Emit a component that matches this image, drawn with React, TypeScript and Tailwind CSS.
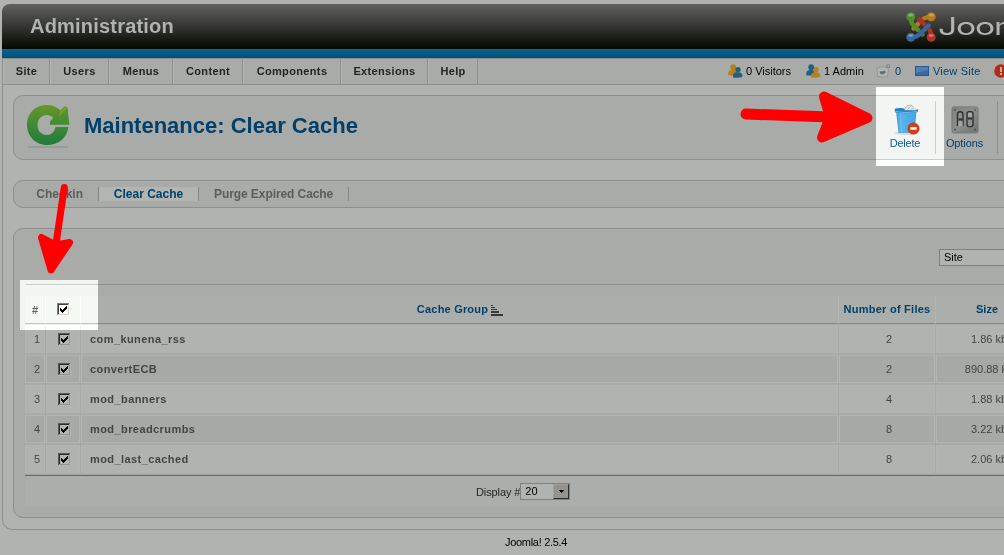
import React from 'react';

const menu = [
  { label: 'Site', w: 'w-[47px]' },
  { label: 'Users', w: 'w-[59px]' },
  { label: 'Menus', w: 'w-[64px]' },
  { label: 'Content', w: 'w-[70px]' },
  { label: 'Components', w: 'w-[98px]' },
  { label: 'Extensions', w: 'w-[87px]' },
  { label: 'Help', w: 'w-[50px]' },
];

const rows = [
  { n: 1, name: 'com_kunena_rss', files: 2, size: '1.86 kb' },
  { n: 2, name: 'convertECB', files: 2, size: '890.88 kb' },
  { n: 3, name: 'mod_banners', files: 4, size: '1.88 kb' },
  { n: 4, name: 'mod_breadcrumbs', files: 8, size: '3.22 kb' },
  { n: 5, name: 'mod_last_cached', files: 8, size: '2.06 kb' },
];

function Checkbox() {
  return (
    <svg width="13" height="13" viewBox="0 0 13 13" className="block shrink-0" shapeRendering="crispEdges">
      <rect width="13" height="13" fill="#b3b5b1" />
      <path d="M0 0H12V1H1V12H0Z" fill="#595a56" />
      <path d="M1 1H11V2H2V11H1Z" fill="#2c2d2b" />
      <path d="M11 1H12V12H1V11H11Z" fill="#94938a" />
      <path d="M3 5h1v1h1v1h1v-1h1v-1h1v-1h1v-1h1v3h-1v1h-1v1h-1v1h-1v1h-1v-1h-1v-1h-1Z" fill="#000" />
    </svg>
  );
}

function JoomlaMark() {
  const d = 'M5 5Q4.5 10.500 8 14L16.500 22.500';
  const colors = ['#4f8f28', '#b9791c', '#b5302a', '#3a65a0'];
  return (
    <svg width="30" height="30" viewBox="0 0 30 30" className="block shrink-0">
      {colors.map((c, i) => (
        <g key={c} transform={`rotate(${i * 90} 15 15)`}>
          <path d={d} fill="none" stroke="#2c2e2a" strokeWidth="5.6" opacity="0.5" />
          <path d={d} fill="none" stroke={c} strokeWidth="4.4" strokeLinecap="round" />
          <circle cx="4.8" cy="4.8" r="4.500" fill={c} />
        </g>
      ))}
      <path d="M5 5Q4.500 10.500 8 14L12 18" fill="none" stroke="#4f8f28" strokeWidth="4.400" />
      <g fill="#c3c7bb" opacity="0.55">
        <ellipse cx="4.8" cy="3" rx="2.6" ry="1.5" />
        <ellipse cx="25.2" cy="3" rx="2.6" ry="1.5" />
        <ellipse cx="4.8" cy="23.5" rx="2.6" ry="1.2" />
        <ellipse cx="25.2" cy="23.5" rx="2.6" ry="1.2" />
      </g>
    </svg>
  );
}

function RefreshIcon() {
  return (
    <svg width="44" height="45" viewBox="0 0 44 45" className="block shrink-0">
      <defs>
        <linearGradient id="rg" x1="0" y1="0" x2="0" y2="1">
          <stop offset="0" stopColor="#69952a" />
          <stop offset="0.5" stopColor="#3f8a34" />
          <stop offset="1" stopColor="#227a3c" />
        </linearGradient>
      </defs>
      <path
        d="M20.5 1C9 1 1 9.800 1 21s8.500 20 20 20c11 0 20.500-7 21.300-18H29.500c-1 4.800-4 8-8.700 8-5.500 0-9.300-4.200-9.300-10s4-10 9.300-10c2.800 0 4.800 1 6.400 2.800L24 17.500V20.700H43.300L41.500 3.500 39 2.300 34.200 6.200C30.500 2.700 26.500 1 20.500 1Z"
        fill="url(#rg)"
      />
      <path d="M34 7l5.500-4.500 2 1.200-9 9z" fill="#7da423" opacity=".7" />
      <rect x="2" y="42" width="40" height="2" rx="1" fill="#999b98" />
    </svg>
  );
}

function UsersIcon({ back, front }: { back: string; front: string }) {
  return (
    <svg width="15" height="14" viewBox="0 0 15 14" className="block shrink-0">
      <circle cx="5.200" cy="3.200" r="2.900" fill={back} />
      <path d="M0.300 11.500V9Q0.500 6.500 3.500 6H6.500Q9 6.500 9 9V11.500Z" fill={back} />
      <circle cx="10" cy="5.600" r="2.700" fill={front} />
      <path d="M5 13.500V11Q5.500 8.900 8 8.300H11.500Q14 8.700 14.300 11V13Q10 14.200 5 13.500Z" fill={front} />
    </svg>
  );
}

function MailIcon() {
  return (
    <svg width="15" height="14" viewBox="0 0 15 14" className="block shrink-0">
      <path d="M1 4.500Q4 2 10 3L12.500 5 11.500 12.500Q6 13.500 1.500 12.500Z" fill="#b2b5b1" stroke="#8d908f" strokeWidth=".8" />
      <path d="M3.500 7.500l5-1 1.500 1.800-2.500 2.200H4.500Z" fill="#73838b" />
      <path d="M4 8l2 1.200L9 7.500" stroke="#3d5662" fill="none" strokeWidth=".8" />
      <rect x="10.500" y=".5" width="3.500" height="3.500" rx=".8" fill="#6f8490" />
      <rect x="11.500" y="1.500" width="1.400" height="1.500" fill="#b7c2c8" />
    </svg>
  );
}

function TrashIcon() {
  return (
    <svg width="28" height="32" viewBox="0 0 28 32" className="block">
      <defs>
        <linearGradient id="tr" x1="0" y1="0" x2="1" y2="0">
          <stop offset="0" stopColor="#3c9fdc" />
          <stop offset=".25" stopColor="#5ab4ea" />
          <stop offset="1" stopColor="#43a6e2" />
        </linearGradient>
      </defs>
      <path d="M0 29.500L4 27.500H20L25 30Q12 32 0 29.500Z" fill="#d5d7d5" />
      <path d="M10 6L12.500 2 17 1 20 3.500 22 5.500V7H9Z" fill="#e9ebea" stroke="#a7aaa9" strokeWidth=".8" />
      <path d="M13.500 5l3-2.500M17.500 6l1-2" stroke="#b4b7b6" />
      <path d="M2 7Q12 10.500 22.500 7L20.500 29H4.500Z" fill="url(#tr)" />
      <path d="M.800 4.800Q3 3.800 9.500 4.200L11 6.300H22L24 5V8Q12 10.500 .8 8.200Z" fill="#2384c4" />
      <path d="M1.200 7.500Q12 9.800 23.500 7.500" fill="none" stroke="#7cc6f0" strokeWidth=".8" />
      <path d="M6 11L7.500 28" stroke="#8acdf4" strokeWidth="1" opacity=".5" />
      <circle cx="19.500" cy="24.500" r="5.600" fill="#de3a10" stroke="#b92b08" strokeWidth=".7" />
      <rect x="16.300" y="23.100" width="6.400" height="2.600" fill="#fff" />
    </svg>
  );
}

function OptionsIcon() {
  return (
    <svg width="28" height="29" viewBox="0 0 28 29" className="block">
      <defs>
        <linearGradient id="op" x1="0" y1="0" x2="1" y2="1">
          <stop offset="0" stopColor="#7d807f" />
          <stop offset=".5" stopColor="#8c8f8d" />
          <stop offset="1" stopColor="#717473" />
        </linearGradient>
      </defs>
      <rect x=".5" y="2" width="27" height="26" rx="2" fill="#929593" />
      <rect x="1" y=".8" width="26" height="25.600" rx="2" fill="url(#op)" stroke="#717473" strokeWidth=".7" />
      <g fill="#4b4d4c">
        <circle cx="4" cy="3.800" r=".9" /><circle cx="24" cy="3.800" r=".9" />
        <circle cx="4" cy="23.500" r=".9" /><circle cx="24" cy="23.500" r=".9" />
      </g>
      <path d="M6.500 20V8.500Q6.500 5.800 9.200 5.800T12 8.500V20" fill="#8c8f8d" stroke="#2f3130" strokeWidth="1.400" />
      <rect x="7.500" y="12.500" width="4" height="2" fill="#2f3130" />
      <rect x="7.500" y="15.500" width="4" height="4.500" fill="#a3a6a4" />
      <rect x="16" y="5.800" width="6" height="14.800" rx="2" fill="#8c8f8d" stroke="#2f3130" strokeWidth="1.400" />
      <rect x="17" y="11.500" width="4" height="2" fill="#2f3130" />
      <rect x="17" y="6.800" width="4" height="4" fill="#a3a6a4" />
    </svg>
  );
}

function Fit({ children, className = '' }: { children: React.ReactNode; className?: string }) {
  return <span className={`whitespace-nowrap ${className}`}>{children}</span>;
}

const cell = 'flex h-[28px] shrink-0 items-center border';
const head = 'flex h-[28px] shrink-0 items-center border-b border-b-[#868986] border-r-[#b3b6b2] border-r bg-[#abaeaa]';

export default function App() {
  return (
    <div className="relative isolate h-[555px] w-[1004px] overflow-hidden bg-[#b0b3af] pl-[2px] pt-[4px] font-['Liberation_Sans',Arial,sans-serif] text-[11px] leading-[14px]">
      <div className="h-[526px] w-[1020px] rounded-tl-[8px] rounded-bl-[10px] border-b border-l border-[#8c8f8c]">
        <header className="-ml-px flex h-[45px] items-center rounded-tl-[8px] bg-linear-to-b from-[#626260] via-[#353634] to-[#050802]">
          <h1 className="w-[904px] shrink-0 pb-[2px] pl-[28px] text-[20px] leading-[24px] font-bold tracking-[0.2px] text-[#b0b3af]">Administration</h1>
          <JoomlaMark />
          <span className="ml-[2px] origin-left scale-x-[1.4] font-['Inter',sans-serif] text-[24px] font-normal leading-[30px] tracking-[-0.8px] text-[#b0b3af]">Joomla!</span>
        </header>
        <div className="-ml-px h-[9px] bg-linear-to-b from-[#086490] to-[#005078]" />
        <nav className="flex h-[27px] border-y border-[#8c8f8c] bg-[#a9aba8]">
          {menu.map((m) => (
            <div key={m.label} className={`${m.w} flex shrink-0 items-center justify-center border-l border-r border-l-[#b4b6b3] border-r-[#8c8f8c] pb-[2px] font-bold tracking-[0.35px] text-[#232422]`}>
              <Fit>{m.label}</Fit>
            </div>
          ))}
          <div className="ml-[250px] flex shrink-0 items-center pb-[2px] text-black">
            <div className="flex w-[78px] items-center gap-[3px]"><UsersIcon back="#b87f1f" front="#1f6080" /><Fit>0 Visitors</Fit></div>
            <div className="flex w-[70px] items-center gap-[3px]"><UsersIcon back="#1f6080" front="#b87f1f" /><Fit>1 Admin</Fit></div>
            <div className="flex w-[39px] items-center gap-[4px] text-[#003f70]"><MailIcon /><Fit>0</Fit></div>
            <div className="flex w-[79px] items-center gap-[4px] text-[#003f70]">
              <svg width="14" height="10" viewBox="0 0 14 10" className="shrink-0">
                <rect x=".5" y=".5" width="13" height="9" fill="#3b68a5" stroke="#285985" />
                <path d="M1 1H13V4L1 7Z" fill="#6897c2" opacity=".5" />
              </svg>
              <Fit className="tracking-[0.2px]">View Site</Fit>
            </div>
            <svg width="14" height="14" viewBox="0 0 14 14" className="shrink-0">
              <circle cx="7" cy="7" r="6.800" fill="#b52c16" />
              <rect x="6" y="3" width="2" height="5" fill="#b0b3af" /><rect x="6" y="9" width="2" height="2" fill="#b0b3af" />
            </svg>
          </div>
        </nav>

        <main className="pl-[10px] pt-[10px]">
          <section className="flex h-[65px] rounded-l-[10px] border border-[#8c8f8c] bg-[#a9aba8]">
            <div className="flex w-[862px] shrink-0 pl-[12px] pt-[8px]">
              <RefreshIcon />
              <h2 className="ml-[14px] mt-[9px] text-[22px] leading-[26px] font-bold text-[#00406b]">Maintenance: Clear Cache</h2>
            </div>
            <div className="my-[5px] flex w-[60px] shrink-0 justify-center border-r border-[#8e918e]">
              <button className="relative z-10 flex flex-col items-center text-[#0b5a95]">
                <span className="ml-[4px] mt-[3px]"><TrashIcon /></span>
                <span className="-ml-px tracking-[-0.2px]">Delete</span>
              </button>
            </div>
            <div className="my-[5px] flex w-[62px] shrink-0 flex-col items-center border-r border-[#8e918e] pr-[4px] text-[#003f70]">
              <span className="mt-[5px]"><OptionsIcon /></span>
              <span className="mt-px tracking-[-0.1px]">Options</span>
            </div>
          </section>

          <nav className="mt-[20px] flex h-[28px] items-center rounded-l-[10px] border border-[#8c8f8c] bg-[#a9aba8] text-[12px] font-bold text-[#5b5d5b]">
            <span className="flex h-[14px] w-[85px] items-center justify-end border-r border-[#858885] pr-[15px]"><Fit>Checkin</Fit></span>
            <span className="flex h-[14px] w-[100px] items-center justify-center border-r border-[#858885] bg-[#b2b5b1] text-[#00406b]"><Fit>Clear Cache</Fit></span>
            <span className="flex h-[14px] w-[150px] items-center border-r border-[#858885] pl-[15px]"><Fit className="tracking-[-0.08px]">Purge Expired Cache</Fit></span>
          </nav>

          <section className="mt-[20px] h-[290px] rounded-l-[10px] border border-[#8c8f8c] bg-[#a9aba8] pl-[11px]">
            <div className="flex h-[55px] pl-[914px] pt-[20px]">
              <div className="h-[17px] w-[90px] shrink-0 border border-[#7e817e] bg-[#b0b3af] pl-[4px] text-black">Site</div>
            </div>
            <div className="ml-px h-px bg-[#8c8f8c]" />
            <div className="mt-[11px] flex font-bold text-[#00406b]">
              <div className={`${head} w-[21px] justify-center text-[#444543]`}>#</div>
              <div className={`${head} w-[35px] justify-center pb-px pl-px`}><Checkbox /></div>
              <div className={`${head} w-[758px] justify-center gap-[2px] pb-px pl-px`}>
                <Fit className="tracking-[0.2px]">Cache Group</Fit>
                <svg width="13" height="12" viewBox="0 0 13 12" className="mt-[2px]" shapeRendering="crispEdges" fill="#383a38"><path d="M1 1h2v1H1zM1 3h4v1H1zM1 5h6v1H1zM1 7h8v2H1zM1 10h12v2H1z" /></svg>
              </div>
              <div className={`${head} w-[97px] justify-center pb-px`}><Fit className="tracking-[0.25px]">Number of Files</Fit></div>
              <div className={`${head} w-[103px] justify-center pb-px`}>Size</div>
            </div>
            {rows.map((r, i) => {
              const c = i % 2 ? 'bg-[#a6a9a5] border-[#b2b5b1]' : 'bg-[#b0b3af] border-[#b2b5b1]';
              return (
                <div key={r.n} className="flex h-[30px] items-center gap-px border-b border-[#a7aaa6] bg-[#a7aaa6] text-[#434543]">
                  <div className={`${cell} ${c} w-[20px] justify-end pr-[4px]`}>{r.n}</div>
                  <div className={`${cell} ${c} w-[34px] justify-center pl-[3px] pt-px`}><Checkbox /></div>
                  <div className={`${cell} ${c} w-[757px] pl-[8px] font-bold tracking-[0.42px]`}>{r.name}</div>
                  <div className={`${cell} ${c} w-[96px] justify-center pl-[4px]`}>{r.files}</div>
                  <div className={`${cell} ${c} w-[104px] justify-center pl-[2px]`}>{r.size}</div>
                </div>
              );
            })}
            <div className="mt-px h-px bg-[#626562]" />
            <div className="flex h-[31px] items-center bg-[#abaeaa] pl-[451px] text-[#232523]">
              <Fit className="tracking-[-0.1px]">Display #</Fit>
              <div className="flex h-[17px] w-[50px] justify-between border border-[#7e817e] bg-[#b0b3af] pl-[4px] text-black">
                <span>20</span>
                <span className="flex h-[15px] w-[16px] items-center justify-center border border-b-[#2d2e2b] border-r-[#2d2e2b] border-l-[#a3a39b] border-t-[#a3a39b] bg-[#94948c]">
                  <svg width="5" height="3" viewBox="0 0 5 3" shapeRendering="crispEdges"><path d="M0 0h5v1H4v1H3v1H2V2H1V1H0z" /></svg>
                </span>
              </div>
            </div>
          </section>
        </main>
      </div>
      <footer className="pl-[503px] pt-[5px] text-black"><Fit className="tracking-[-0.3px]">Joomla! 2.5.4</Fit></footer>

      <div className="absolute left-[876px] top-[87px] h-[79px] w-[68px] bg-[#4d4d4d] mix-blend-color-dodge" />
      <div className="absolute left-[20px] top-[280px] h-[50px] w-[78px] bg-[#4d4d4d] mix-blend-color-dodge" />
      <svg className="absolute left-0 top-0 z-20" width="1004" height="555" viewBox="0 0 1004 555" fill="#f00" stroke="#f00" strokeLinecap="round" strokeLinejoin="round">
        <path d="M746 114L830 117" strokeWidth="11" />
        <path d="M824 96.500L867.500 118 822 137.500 830 117Z" strokeWidth="10" />
        <path d="M64.300 187.500L56 244" strokeWidth="7" />
        <path d="M41.500 237.500L51 270 69.500 242.500 56 245Z" strokeWidth="7" />
      </svg>
    </div>
  );
}
